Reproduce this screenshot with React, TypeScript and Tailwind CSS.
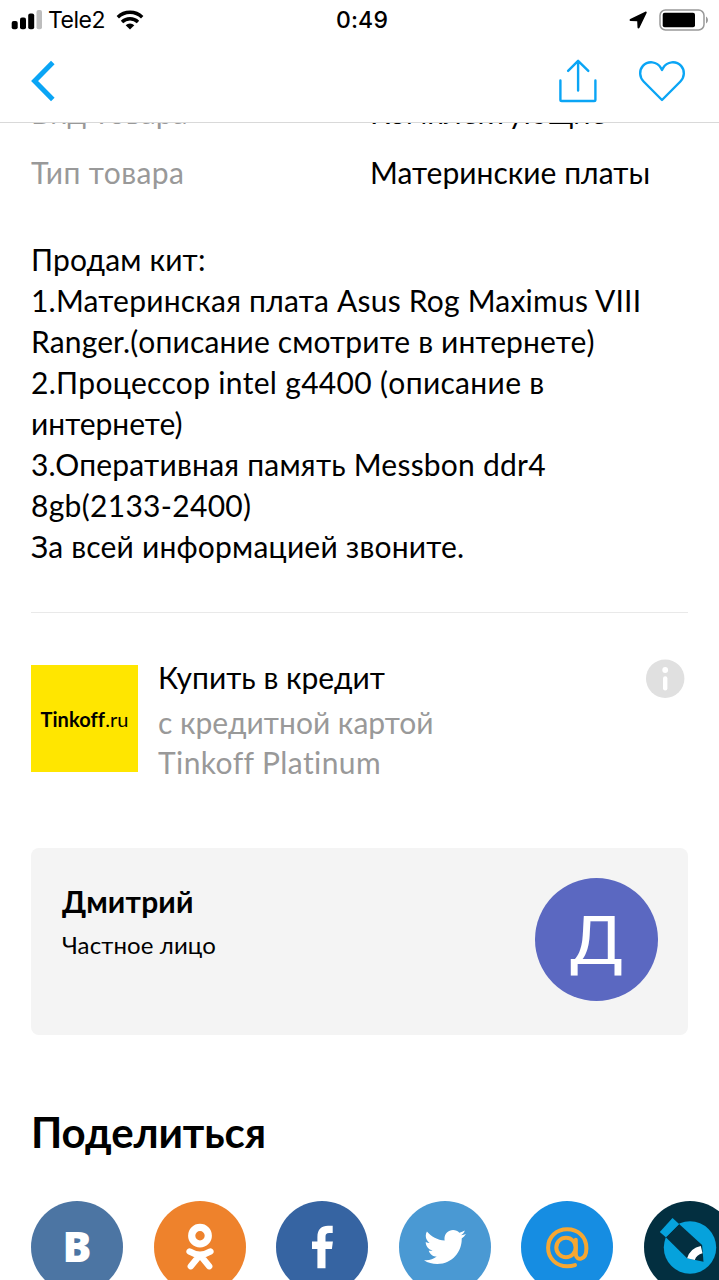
import type { ReactNode } from "react";
import { FaTwitter } from "react-icons/fa";

const description = [
  { text: "Продам кит:", cls: "tracking-[0.16px]" },
  { text: "1.Материнская плата Asus Rog Maximus VIII", cls: "tracking-[0.22px]" },
  { text: "Ranger.(описание смотрите в интернете)", cls: "tracking-[0.14px]" },
  { text: "2.Процессор intel g4400 (описание в", cls: "tracking-[0.32px]" },
  { text: "интернете)", cls: "tracking-[0px]" },
  { text: "3.Оперативная память Messbon ddr4", cls: "tracking-[0.22px]" },
  { text: "8gb(2133-2400)", cls: "tracking-[0.3px]" },
  { text: "За всей информацией звоните.", cls: "tracking-[0.2px]" },
];

function StatusBar() {
  return (
    <div className="grid h-10 grid-cols-[1fr_auto_1fr] items-center pl-[11px] pr-[10px] font-['Inter',sans-serif] text-[23px] leading-10">
      <div className="flex items-center">
        <svg className="h-5 w-8" viewBox="0 0 32 20">
          <rect x="0.7" y="11" width="6" height="8.3" rx="2" />
          <rect x="9" y="7.5" width="6" height="11.8" rx="2" />
          <rect x="17.2" y="3.5" width="6" height="15.8" rx="2" />
          <rect x="25.5" y="0" width="5.5" height="19.3" rx="2" fill="#bdbdbd" />
        </svg>
        <span className="ml-[5px] w-[57px] tracking-[-0.5px]">Tele2</span>
        <svg className="ml-[11px] h-5 w-7" viewBox="0 0 28 20" fill="none" stroke="#000" strokeWidth="3.4">
          <path d="M1.8 7.2a17.4 17.4 0 0 1 24.4 0" />
          <path d="M6 12a11.4 11.4 0 0 1 16 0" />
          <path d="M14 19.4l-4.3-4.2a6.2 6.2 0 0 1 8.6 0z" fill="#000" stroke="none" />
        </svg>
      </div>
      <span className="translate-x-[2px] font-medium tracking-[0.2px]">0:49</span>
      <div className="flex items-center justify-end">
        <svg className="h-[18px] w-[18px]" viewBox="0 0 18 18">
          <path d="M16.2.7L1.2 7.9C.2 8.5.4 9.8 1.6 9.9l6.6.3.3 6.3c.1 1.2 1.4 1.4 2 .3L17.6 2c.5-1-.3-1.8-1.4-1.3z" />
        </svg>
        <svg className="ml-3 h-[22px] w-[50px]" viewBox="0 0 50 22">
          <rect x="1" y="1" width="44" height="20" rx="5.5" fill="none" stroke="#999" strokeWidth="1.5" />
          <rect x="3.7" y="3.8" width="32.3" height="14.4" rx="2" />
          <path d="M47 7.5c2.6 1.5 2.6 5.5 0 7z" fill="#999" />
        </svg>
      </div>
    </div>
  );
}

function NavBar() {
  return (
    <div className="flex h-[82px] items-center pl-[30px] pr-[33.5px] text-[#0aa5f5]">
      <svg className="h-[42px] w-[26px]" viewBox="0 0 26 42" fill="none" stroke="currentColor" strokeWidth="5">
        <path d="M22.8 2.5L4.6 21l18.2 18.5" />
      </svg>
      <svg className="ml-auto h-[46px] w-[40px]" viewBox="0 0 40 46" fill="none" stroke="currentColor" strokeWidth="2.4" strokeLinecap="round" strokeLinejoin="round">
        <path d="M2.4 22.5v19.2q0 1.3 1.3 1.3h32.4q1.3 0 1.3-1.3V22.5M20.1 32.5V3.6M10.1 12.9L20.1 2.8l10.2 10.1" />
      </svg>
      <svg className="ml-10 h-[42px] w-[48px]" viewBox="0 0 48 42" fill="none" stroke="currentColor" strokeWidth="2.4" strokeLinejoin="round">
        <path d="M24 40L5.6 21.5C1.4 17.2.9 10.3 4.9 5.9c4.9-5.3 14.1-4.9 18.1 2.2l1 1.9 1-1.9c4-7.1 13.2-7.5 18.1-2.2 4 4.4 3.5 11.3-.7 15.6z" />
      </svg>
    </div>
  );
}

function Row({ label, value, className }: { label: string; value: string; className: string }) {
  return (
    <div className="flex h-[60px] whitespace-nowrap">
      <span className={`w-[339px] text-[#999] ${className}`}>{label}</span>
      <span className="tracking-[0.02px]">{value}</span>
    </div>
  );
}

function Share({ className, children }: { className: string; children: ReactNode }) {
  return (
    <div className={`flex size-[92px] shrink-0 items-center justify-center rounded-full ${className}`}>
      {children}
    </div>
  );
}

export default function App() {
  return (
    <div className="flex h-[1280px] w-[719px] flex-col overflow-hidden bg-white font-['Lato',sans-serif] text-black">
      <header className="h-[123px] shrink-0 border-b border-[#d9d9d9]">
        <StatusBar />
        <NavBar />
      </header>
      <main className="min-h-0 flex-1 overflow-hidden pl-[31px]">
        <section className="-mt-[31px] h-[147px] text-[30px] leading-[41px]">
          <Row label="Вид товара" value="Комплектующие" className="tracking-[0.1px]" />
          <Row label="Тип товара" value="Материнские платы" className="tracking-[0.4px]" />
        </section>
        <section className="whitespace-nowrap text-[30px] leading-[41px]">
          {description.map((line) => (
            <p key={line.text} className={line.cls}>{line.text}</p>
          ))}
        </section>
        <div className="mt-[45px] h-px w-[657px] bg-[#e9e9e9]" />
        <section className="mt-[52px] flex h-[107px] w-[657px]">
          <div className="flex size-[107px] items-center justify-center bg-[#ffe600] text-[20px] tracking-[0.1px]">
            <b>Tinkoff</b>.ru
          </div>
          <div className="-mt-[8px] ml-5 whitespace-nowrap text-[30px] leading-[40px]">
            <p className="mb-[5px]">Купить в кредит</p>
            <p className="text-[#999]">с кредитной картой</p>
            <p className="tracking-[0.4px] text-[#999]">Tinkoff Platinum</p>
          </div>
          <svg className="-mt-[6px] ml-auto mr-[3px] size-[39px]" viewBox="0 0 39 39">
            <circle cx="19.2" cy="19.7" r="19.2" fill="#e0e0e0" />
            <circle cx="19.2" cy="11" r="2.9" fill="#fff" />
            <path d="M19.2 19.5v9.8" stroke="#fff" strokeWidth="4.4" strokeLinecap="round" />
          </svg>
        </section>
        <section className="mt-[76px] flex h-[187px] w-[657px] justify-between rounded-[8px] bg-[#f4f4f4] pl-[31px] pr-[30px] pt-[30px]">
          <div className="whitespace-nowrap">
            <p className="mt-[3px] text-[30px] font-bold leading-[40px] tracking-[0.2px]">Дмитрий</p>
            <p className="mt-[8px] text-[24px] leading-[32px] tracking-[0.1px]">Частное лицо</p>
          </div>
          <div className="flex size-[123px] items-center justify-center rounded-full bg-[#5b68c1] pt-[4px] font-['Roboto',sans-serif] text-[67px] text-white">
            <span className="scale-x-[1.08]">Д</span>
          </div>
        </section>
        <h2 className="mt-[71px] text-[42px] font-bold leading-[52px] tracking-[-0.1px]">Поделиться</h2>
        <section className="mt-[43px] flex gap-[30.5px]">
          <Share className="bg-[#4c75a3] pb-[2px] font-['Open_Sans',sans-serif] text-[43px] font-extrabold text-white">B</Share>
          <Share className="bg-[#ee822c]">
            <svg className="size-full" viewBox="0 0 92 92" fill="none" stroke="#fff" strokeLinecap="round">
              <circle cx="46" cy="34.7" r="8.3" strokeWidth="7.2" />
              <path d="M35.6 50.5q10.4 6.4 20.8 0M46 54L36.8 65.2M46 54l9.2 11.2" strokeWidth="6.4" />
            </svg>
          </Share>
          <Share className="bg-[#3664a2]">
            <svg className="size-full" viewBox="0 0 92 92" fill="#fff">
              <path d="M41.4 67.3V48H36v-7.5h5.4V36c0-7.8 4.1-11.3 10.6-11.3h4.7V32h-3.5c-2.8 0-3.7 1.3-3.7 3.7v4.8h7.4l-1 7.5h-6.4v19.3z" />
            </svg>
          </Share>
          <Share className="bg-[#4a99d3] pb-px text-[42px] text-white"><FaTwitter /></Share>
          <Share className="bg-[#168de2]">
            <svg className="size-full" viewBox="0 0 92 92" fill="none" stroke="#f6a732" strokeWidth="4" strokeLinecap="round">
              <circle cx="45" cy="46.5" r="9.7" />
              <path d="M54.8 38.7V53c0 7.2 10.6 7.2 10.6-5.7C65.4 35.7 57.2 28.3 46.2 28.3s-19.1 7.7-19.1 18.5S35.7 65.3 46.2 65.3q4.1 0 7.8-1.2" />
            </svg>
          </Share>
          <Share className="bg-[#032f40]">
            <svg className="size-full" viewBox="0 0 92 92">
              <circle cx="46" cy="46.5" r="26.2" fill="#06a2dc" />
              <path d="M21.8 36.3L35.1 23 58.1 44l1.4 16.7-16.4-3.4z" fill="#032f40" />
              <path d="M15.8 31l12.7-14 6.6 6-13.3 13.3z" fill="#06a2dc" />
              <path d="M43.1 57.3Q46.3 47 56.8 45l1.7 7.3q-6 1.5-7.7 6.7z" fill="#fff" />
            </svg>
          </Share>
        </section>
      </main>
    </div>
  );
}
